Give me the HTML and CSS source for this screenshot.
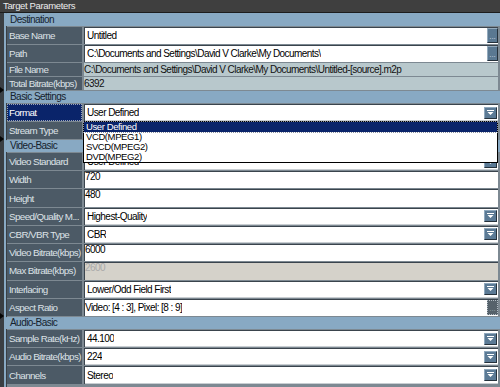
FILE: index.html
```html
<!DOCTYPE html>
<html>
<head>
<meta charset="utf-8">
<link rel="stylesheet" href="styles.css">
</head>
<body>
<div class="win">
  <div class="title">Target Parameters</div>
  <div class="grid">
    <div class="sect first">Destination</div>
    <div class="row"><div class="lbl">Base Name</div><div class="val edit"><span class="txt">Untitled</span><span class="dots">...</span></div></div>
    <div class="row"><div class="lbl">Path</div><div class="val edit"><span class="txt">C:\Documents and Settings\David V Clarke\My Documents\</span><span class="dots">...</span></div></div>
    <div class="row s"><div class="lbl">File Name</div><div class="val ro">C:\Documents and Settings\David V Clarke\My Documents\Untitled-[source].m2p</div></div>
    <div class="row s"><div class="lbl">Total Bitrate(kbps)</div><div class="val ro">6392</div></div>

    <div class="sect mark">Basic Settings</div>
    <div class="row"><div class="lbl sel">Format</div><div class="val combo"><span class="txt">User Defined</span><span class="cb"><svg width="7" height="6" viewBox="0 0 7 6"><path d="M0 0h7v1H0z M0.5 2h6L3.5 5z" fill="#fff"/></svg></span>
      <div class="list">
        <div class="item on">User Defined</div>
        <div class="item">VCD(MPEG1)</div>
        <div class="item">SVCD(MPEG2)</div>
        <div class="item">DVD(MPEG2)</div>
      </div>
    </div></div>
    <div class="row"><div class="lbl">Stream Type</div><div class="val combo"><span class="txt"></span><span class="cb"><svg width="7" height="6" viewBox="0 0 7 6"><path d="M0 0h7v1H0z M0.5 2h6L3.5 5z" fill="#fff"/></svg></span></div></div>

    <div class="sect mark">Video-Basic</div>
    <div class="row t"><div class="lbl">Video Standard</div><div class="val combo"><span class="txt">User Defined</span><span class="cb"><svg width="7" height="6" viewBox="0 0 7 6"><path d="M0 0h7v1H0z M0.5 2h6L3.5 5z" fill="#fff"/></svg></span></div></div>
    <div class="row t"><div class="lbl">Width</div><div class="val edit top">720</div></div>
    <div class="row t"><div class="lbl">Height</div><div class="val edit top">480</div></div>
    <div class="row t"><div class="lbl">Speed/Quality M...</div><div class="val combo"><span class="txt">Highest-Quality</span><span class="cb"><svg width="7" height="6" viewBox="0 0 7 6"><path d="M0 0h7v1H0z M0.5 2h6L3.5 5z" fill="#fff"/></svg></span></div></div>
    <div class="row t"><div class="lbl">CBR/VBR Type</div><div class="val combo"><span class="txt">CBR</span><span class="cb"><svg width="7" height="6" viewBox="0 0 7 6"><path d="M0 0h7v1H0z M0.5 2h6L3.5 5z" fill="#fff"/></svg></span></div></div>
    <div class="row t"><div class="lbl">Video Bitrate(kbps)</div><div class="val edit top">6000</div></div>
    <div class="row t"><div class="lbl">Max Bitrate(kbps)</div><div class="val dis top">2600</div></div>
    <div class="row t"><div class="lbl">Interlacing</div><div class="val combo"><span class="txt">Lower/Odd Field First</span><span class="cb"><svg width="7" height="6" viewBox="0 0 7 6"><path d="M0 0h7v1H0z M0.5 2h6L3.5 5z" fill="#fff"/></svg></span></div></div>
    <div class="row t"><div class="lbl">Aspect Ratio</div><div class="val edit tight"><span class="txt">Video: [4 : 3], Pixel: [8 : 9]</span><span class="dots dark">...</span></div></div>

    <div class="sect mark">Audio-Basic</div>
    <div class="row t"><div class="lbl">Sample Rate(kHz)</div><div class="val combo"><span class="txt">44.100</span><span class="cb"><svg width="7" height="6" viewBox="0 0 7 6"><path d="M0 0h7v1H0z M0.5 2h6L3.5 5z" fill="#fff"/></svg></span></div></div>
    <div class="row t"><div class="lbl">Audio Bitrate(kbps)</div><div class="val combo"><span class="txt">224</span><span class="cb"><svg width="7" height="6" viewBox="0 0 7 6"><path d="M0 0h7v1H0z M0.5 2h6L3.5 5z" fill="#fff"/></svg></span></div></div>
    <div class="row t"><div class="lbl">Channels</div><div class="val combo"><span class="txt">Stereo</span><span class="cb"><svg width="7" height="6" viewBox="0 0 7 6"><path d="M0 0h7v1H0z M0.5 2h6L3.5 5z" fill="#fff"/></svg></span></div></div>
  </div>
</div>
</body>
</html>
```

FILE: styles.css
```css
* { box-sizing: border-box; margin: 0; padding: 0; }
html, body { width: 500px; height: 387px; overflow: hidden; }
body {
  background: #3a3f44;
  font-family: "Liberation Sans", Arial, sans-serif;
  font-size: 10px;
  letter-spacing: -0.55px;
}
.win { width: 500px; height: 387px; display: flex; flex-direction: column; }
.title {
  height: 13px;
  flex: none;
  background: #3f3f3f;
  color: #ececec;
  border-bottom: 1px solid #1c1c1c;
  padding-left: 3px;
  line-height: 12px;
  font-size: 9.5px;
  letter-spacing: -0.35px;
}
.grid {
  flex: 1;
  display: flex;
  flex-direction: column;
  background: linear-gradient(to right, #3a3f44 0 4px, #88a9c3 4px 6px, #3a3f44 6px 7px, #7d8992 7px);
}
.sect {
  position: relative;
  flex: none;
  margin-left: 4px;
  margin-top: 1px;
  height: 12px;
  background: #88a9c3;
  color: #15222d;
  padding-left: 6px;
  line-height: 12px;
  border-top-left-radius: 3px;
}
.sect.first { margin-top: 0; height: 13px; line-height: 13px; }
.sect.mark::before {
  content: "";
  position: absolute;
  left: -4px;
  top: -4px;
  border-left: 4px solid #050505;
  border-top: 3px solid transparent;
  border-bottom: 3px solid transparent;
}
.row {
  flex: none;
  display: flex;
  margin-left: 7px;
  margin-top: 1px;
  height: 17px;
  padding-right: 2px;
}
.row.s { height: 13px; }
.row.t { height: 17.22px; }
.lbl {
  width: 75px;
  flex: none;
  background: #4c5a66;
  color: #dde2e6;
  padding-left: 2px;
  display: flex;
  align-items: center;
  white-space: nowrap;
  overflow: hidden;
  font-size: 9.8px;
  letter-spacing: -0.6px;
}
.lbl.sel {
  background: #0a246a;
  color: #fff;
  outline: 1px dotted #9aa4b8;
  outline-offset: -1px;
}
.val {
  flex: 1;
  min-width: 0;
  margin-left: 2px;
  display: flex;
  align-items: center;
  position: relative;
  background: #fff;
  color: #000;
  box-shadow: inset 1px 1px 0 #3a444d;
  padding-left: 3px;
  white-space: nowrap;
}
.val .txt { overflow: hidden; }
.val.top { align-items: flex-start; padding-left: 1px; line-height: 11px; }
.val.tight { padding-left: 1px; }
.val.ro { background: #b8c8cc; box-shadow: none; padding-left: 0; color: #111; }
.val.dis { background: #d5d2ca; color: #a9a9a9; }
.val.combo { box-shadow: inset 1px 1px 0 #3a444d, inset 0 -1px 0 #c9ced2; }
.dots {
  margin-left: auto;
  width: 11px;
  height: 15px;
  flex: none;
  background: #5a7891;
  border: 1px solid;
  border-color: #93aabd #25313b #25313b #93aabd;
  color: #d3dde6;
  font-size: 8px;
  letter-spacing: 0;
  line-height: 9px;
  padding-top: 3px;
  text-align: center;
  overflow: hidden;
}
.dots.dark {
  background: #56626b;
  border: 1px dotted #b3bcc4;
  color: #9aa6b0;
}
.cb {
  margin-left: auto;
  margin-right: 1px;
  width: 13px;
  height: 12px;
  flex: none;
  background: #5b7a95;
  border: 1px solid;
  border-color: #8fa8bd #26323c #26323c #8fa8bd;
  display: flex;
  align-items: center;
  justify-content: center;
}
.cb svg { display: block; }
.list {
  position: absolute;
  z-index: 10;
  top: 17px;
  left: -1px;
  right: 0;
  height: 42px;
  background: #fff;
  border: 1px solid #000;
}
.item {
  height: 10px;
  line-height: 10px;
  padding-left: 2px;
  color: #000;
  font-size: 9.5px;
  letter-spacing: -0.4px;
  overflow: hidden;
}
.item.on {
  background: #0a246a;
  color: #fff;
  outline: 1px dotted #8d93a0;
  outline-offset: 0;
}
```
